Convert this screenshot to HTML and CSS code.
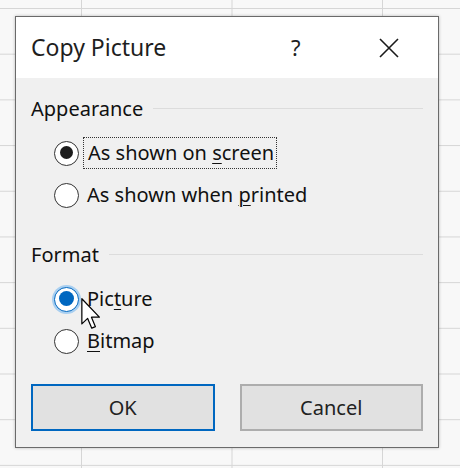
FILE: index.html
```html
<!DOCTYPE html>
<html>
<head>
<meta charset="utf-8">
<link rel="stylesheet" href="styles.css">
</head>
<body>
<div class="dialog">
  <div class="titlebar">
    <span class="title">Copy Picture</span>
    <span class="help">?</span>
    <span class="close">
      <svg width="20" height="20" viewBox="0 0 20 20"><path d="M1 1 L19 19 M19 1 L1 19" stroke="#1a1a1a" stroke-width="1.6" fill="none"/></svg>
    </span>
  </div>
  <div class="content">
    <div class="group-label"><span>Appearance</span><span class="rule"></span></div>
    <div class="options">
      <div class="option"><span class="radio checked"></span><span class="label focus">As shown on <u>s</u>creen</span></div>
      <div class="option"><span class="radio"></span><span class="label">As shown when <u>p</u>rinted</span></div>
    </div>
    <div class="group-label second"><span>Format</span><span class="rule"></span></div>
    <div class="options">
      <div class="option"><span class="radio checked hover"></span><span class="label">Pic<u>t</u>ure</span>
        <svg class="cursor" width="20" height="32" viewBox="0 0 13 21"><path d="M0.5 0.5 L0.5 17 L4.3 13.4 L7 19.8 L9.4 18.8 L6.8 12.6 L12 12.6 Z" fill="#fff" stroke="#000" stroke-width="0.8" stroke-linejoin="round"/></svg>
      </div>
      <div class="option"><span class="radio"></span><span class="label"><u>B</u>itmap</span></div>
    </div>
    <div class="buttons">
      <button class="btn default">OK</button>
      <button class="btn">Cancel</button>
    </div>
  </div>
</div>
</body>
</html>
```
FILE: styles.css
```css
html, body {
  margin: 0;
  padding: 0;
}
body {
  width: 460px;
  height: 468px;
  overflow: hidden;
  background-color: #f8f8f8;
  background-image:
    linear-gradient(to right, #d6d6d6 0, #d6d6d6 1px, transparent 1px),
    linear-gradient(to bottom, #d6d6d6 0, #d6d6d6 1px, transparent 1px);
  background-size: 150.5px 45.7px;
  background-position: 81px 8px;
  font-family: "Noto Sans", "Open Sans", sans-serif;
  padding-top: 16px;
}
.dialog {
  margin-left: 15px;
  width: 422px;
  height: 430px;
  border: 1px solid #6a6a6a;
  background: #f0f0f0;
  box-shadow: 0 0 3px rgba(0,0,0,0.25);
  display: flex;
  flex-direction: column;
}
.titlebar {
  height: 61px;
  background: #fff;
  display: flex;
  align-items: center;
  padding-left: 15px;
}
.title {
  font-size: 23px;
  color: #1e1e1e;
  flex: 1;
  padding-bottom: 1px;
}
.help {
  font-size: 22px;
  color: #1e1e1e;
  width: 20px;
  margin-right: 68px;
  padding-bottom: 2px;
}
.close {
  width: 20px;
  height: 20px;
  margin-right: 39px;
  display: flex;
}
.content {
  flex: 1;
  padding: 15px 15px 15px 15px;
  display: flex;
  flex-direction: column;
  font-size: 20px;
  color: #111;
}
.group-label {
  height: 30px;
  display: flex;
  align-items: center;
  gap: 10px;
}
.group-label.second {
  margin-top: 23px;
}
.rule {
  flex: 1;
  height: 1px;
  background: #dcdcdc;
  margin-top: 0;
}
.options {
  margin-top: 9px;
  padding-left: 23px;
}
.option {
  height: 42px;
  display: flex;
  align-items: center;
  position: relative;
}
.radio {
  border: 1.5px solid #333;
  border-radius: 50%;
  background: #fff;
  box-sizing: border-box;
  width: 25px;
  height: 25px;
  flex: none;
  position: relative;
}
.radio.checked::after {
  content: "";
  position: absolute;
  left: 4.5px;
  top: 4.5px;
  width: 13px;
  height: 13px;
  border-radius: 50%;
  background: #1c1c1c;
}
.radio.hover {
  border-color: #0067c0;
  box-shadow: 0 0 0 2px #a9cff0;
}
.radio.hover::after {
  background: #0067c0;
  left: 3.5px;
  top: 3.5px;
  width: 15px;
  height: 15px;
}
.label {
  margin-left: 8px;
  line-height: 28px;
}
.label u {
  text-decoration-thickness: 1px;
  text-underline-offset: 3px;
}
.focus {
  margin-left: 5px;
  padding: 1px 2px 1px 4px;
  outline: 1px dotted #333;
}
.cursor {
  position: absolute;
  left: 27px;
  top: 20px;
}
.buttons {
  margin-top: 22px;
  display: grid;
  grid-template-columns: 1fr 1fr;
  gap: 25px;
}
.btn {
  height: 47px;
  font-family: "Noto Sans", "Open Sans", sans-serif;
  font-size: 20px;
  color: #222;
  background: #e1e1e1;
  border: 2px solid #adadad;
  border-radius: 0;
  padding: 0;
}
.btn.default {
  border: 2px solid #0067c0;
}
```
